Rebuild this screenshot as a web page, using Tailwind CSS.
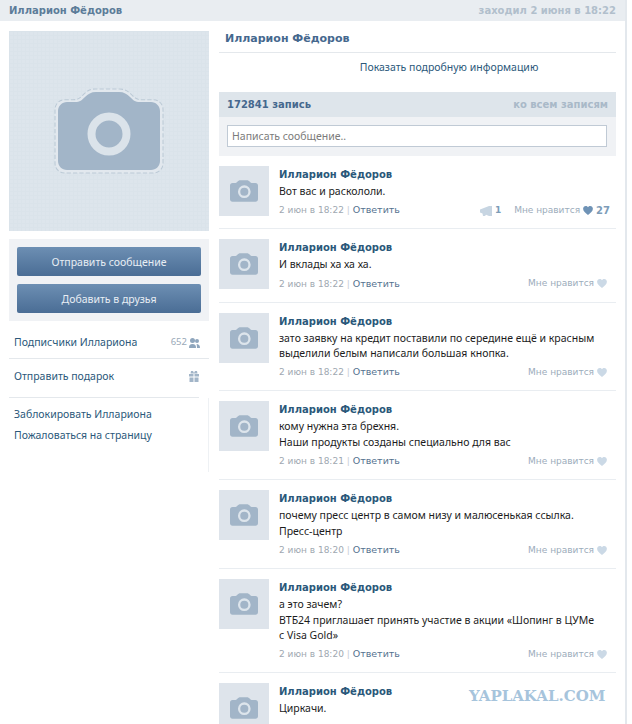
<!DOCTYPE html>
<html lang="ru">
<head>
  <meta charset="UTF-8" />
  <title>Илларион Фёдоров</title>
  <script src="https://cdn.jsdelivr.net/npm/@tailwindcss/browser@4"></script>
</head>
<body class="bg-white font-['Noto_Sans',sans-serif] text-[10.5px] text-[#1c1c1c]">
  <svg class="hidden">
    <symbol id="cam" viewBox="0 0 102 78">
      <path fill="#a2b5c8" d="M9 10h8c5 0 7-2 10-5 3-3 6-5 11-5h23c5 0 8 2 11 5 3 3 5 5 10 5h11c5 0 9 4 9 9v50c0 5-4 9-9 9H9c-5 0-9-4-9-9V19c0-5 4-9 9-9z"/>
    </symbol>
    <symbol id="heart" viewBox="0 0 12 11">
      <path d="M6 11C3 8.600 0 6.500 0 3.400 0 1.400 1.500 0 3.300 0 4.400 0 5.400.6 6 1.600 6.600.6 7.600 0 8.700 0 10.500 0 12 1.400 12 3.400 12 6.500 9 8.600 6 11z"/>
    </symbol>
  </svg>

  <div class="relative h-[724px] w-[632px] overflow-hidden">
    <div class="w-[627px] h-full border-r-2 border-[#e3e8ed]">
      <div class="flex h-[21px] items-center justify-between bg-[#e9edf1] pl-[9px] pr-[9px] font-['DejaVu_Sans',sans-serif] text-[10px] font-bold text-[#5c7c99]">
        <span>Илларион Фёдоров</span>
        <span class="text-[#b1bfcc]">заходил 2 июня в 18:22</span>
      </div>

      <div class="flex pl-[9px] pt-[10px]">
        <div class="w-[200px] shrink-0">
          <svg class="block h-[200px] w-[200px]" viewBox="0 0 200 200">
            <defs>
              <pattern id="weave" width="4" height="4" patternUnits="userSpaceOnUse">
                <rect width="4" height="4" fill="#dde5ec"/>
                <path d="M0 .5h4M.5 0v4" stroke="#dae3ea" stroke-width="1"/>
              </pattern>
            </defs>
            <rect width="200" height="200" fill="url(#weave)"/>
            <path transform="translate(46 58) scale(1.059 1.077)" fill="#e2e8ee" stroke="#bccad6" stroke-width="1" stroke-dasharray="4 2" d="M9 10h8c5 0 7-2 10-5 3-3 6-5 11-5h23c5 0 8 2 11 5 3 3 5 5 10 5h11c5 0 9 4 9 9v50c0 5-4 9-9 9H9c-5 0-9-4-9-9V19c0-5 4-9 9-9z"/>
            <use href="#cam" x="49" y="61" width="102" height="78"/>
            <circle cx="100" cy="103" r="17.500" fill="none" stroke="#dbe3ea" stroke-width="8"/>
          </svg>

          <div class="mt-2 flex flex-col gap-2 bg-[#f0f2f5] p-2">
            <div class="flex h-[29px] items-center justify-center rounded-[2px] bg-gradient-to-b from-[#6d8fb3] to-[#4a6d95] pt-[2px] text-[#e8eef4]">Отправить сообщение</div>
            <div class="flex h-[29px] items-center justify-center rounded-[2px] bg-gradient-to-b from-[#6d8fb3] to-[#4a6d95] pt-[2px] text-[#e8eef4]">Добавить в друзья</div>
          </div>

          <div class="flex h-[38px] items-center justify-between border-b border-[#e4e8ec] pl-[5px] pr-[9px] pt-[6px] text-[#2b587a]">
            <span>Подписчики Иллариона</span>
            <span class="flex items-center gap-[2px] text-[9.5px] text-[#9aa9b8]">652
              <svg class="h-[10px] w-[11px]" viewBox="0 0 11 10" fill="#8fa6bd"><circle cx="3.500" cy="2.500" r="2.500"/><path d="M0 10c0-3 1-4 3.500-4S7 7 7 10z"/><circle cx="8" cy="3" r="2"/><path d="M7.500 6c2 0 3.500 1 3.500 4H8c0-2-.2-3-.5-4z"/></svg>
            </span>
          </div>
          <div class="flex h-[39px] w-[190px] items-center justify-between border-b border-[#e4e8ec] pb-[3px] pl-[5px] text-[#2b587a]">
            <span>Отправить подарок</span>
            <svg class="h-[11px] w-[10px]" viewBox="0 0 10 11" fill="#a2b5c8"><path d="M0 3h4.500v2.500H0zM5.500 3H10v2.500H5.500zM.5 6.500h4V11h-4zM5.500 6.500h4V11h-4z"/><path d="M2 0h2l1 2 1-2h2l.5 2.500h-7z"/></svg>
          </div>
          <div class="flex flex-col gap-[5px] border-r border-[#eef1f4] pb-[29px] pl-[5px] pt-[8px] text-[#2b587a]">
            <span class="leading-[16px]">Заблокировать Иллариона</span>
            <span class="leading-[16px]">Пожаловаться на страницу</span>
          </div>
        </div>

        <div class="ml-[10px] w-[397px]">
          <div class="flex h-[22px] items-center border-b border-[#e4e8ec] pb-[4px] pl-[6px] font-['DejaVu_Sans',sans-serif] text-[11px] font-bold text-[#45688e]">Илларион Фёдоров</div>
          <div class="flex h-[39px] justify-center pl-[63px] pt-[7px] text-[#2b587a]">Показать подробную информацию</div>
          <div class="flex h-[25px] items-center justify-between bg-[#dee5eb] px-2 font-['DejaVu_Sans',sans-serif] text-[10px] font-bold text-[#45688e]">
            <span>172841 запись</span>
            <span class="text-[#a9b9c8]">ко всем записям</span>
          </div>
          <div class="h-[39px] bg-[#f0f2f5] px-2 pt-2">
            <div class="flex h-[22px] w-[380px] items-center border border-[#c0cad5] bg-white pl-1 pt-[1px] text-[#7b7b7b]">Написать сообщение..</div>
          </div>

          <div id="wall" class="mt-[10px]">
            <div class="mb-[10px] flex border-b border-[#e9edf1] pb-[8.83px]">
              <svg class="h-[50px] w-[50px] shrink-0" viewBox="0 0 50 50"><rect width="50" height="50" fill="#dee4eb"/><use href="#cam" x="11" y="14" width="28" height="22"/><circle cx="25.300" cy="25.700" r="5.200" fill="none" stroke="#dde5ec" stroke-width="2.300"/></svg>
              <div class="ml-[10px] flex-1 pr-[6px]">
                <div class="mt-[1px] h-4 font-['DejaVu_Sans',sans-serif] text-[10px] font-bold leading-4 text-[#2b587a]">Илларион Фёдоров</div>
                <div class="mt-[1px] leading-[15.5px]">Вот вас и раскололи.</div>
                <div class="mt-[2px] flex h-[18px] items-center justify-between font-['DejaVu_Sans',sans-serif] text-[9px] text-[#a0a8b1]">
                  <span>2 июн в 18:22 <span class="text-[#c5ccd3]">|</span> <span class="text-[9.5px] text-[#55728f]">Ответить</span></span>
                  <span class="flex items-center">
                    <svg class="h-[10px] w-[12px]" viewBox="0 0 12 10" fill="#c7d5e2"><path d="M0 3.500 9 0h3v10H9L6 8.700 5 10H3L2.500 7.500 0 6.500z"/></svg>
                    <span class="ml-[3px] font-bold text-[#7d9cb8]">1</span>
                    <span class="ml-[13px] text-[#9cacbb]">Мне нравится</span>
                    <svg class="ml-[3px] h-[9px] w-[10px] fill-[#6f93b6]"><use href="#heart"/></svg>
                    <span class="ml-[3px] text-[10px] font-bold text-[#7d9cb8]">27</span>
                  </span>
                </div>
              </div>
            </div>

            <div class="mb-[10px] flex border-b border-[#e9edf1] pb-[8.83px]">
              <svg class="h-[50px] w-[50px] shrink-0" viewBox="0 0 50 50"><rect width="50" height="50" fill="#dee4eb"/><use href="#cam" x="11" y="14" width="28" height="22"/><circle cx="25.300" cy="25.700" r="5.200" fill="none" stroke="#dde5ec" stroke-width="2.300"/></svg>
              <div class="ml-[10px] flex-1 pr-[6px]">
                <div class="mt-[1px] h-4 font-['DejaVu_Sans',sans-serif] text-[10px] font-bold leading-4 text-[#2b587a]">Илларион Фёдоров</div>
                <div class="mt-[1px] leading-[15.5px]">И вклады ха ха ха.</div>
                <div class="mt-[2px] flex h-[18px] items-center justify-between font-['DejaVu_Sans',sans-serif] text-[9px] text-[#a0a8b1]">
                  <span>2 июн в 18:22 <span class="text-[#c5ccd3]">|</span> <span class="text-[9.5px] text-[#55728f]">Ответить</span></span>
                  <span class="flex items-center"><span class="text-[#9cacbb]">Мне нравится</span><svg class="ml-[3px] mr-[3px] h-[9px] w-[10px] fill-[#cbd9e6]"><use href="#heart"/></svg></span>
                </div>
              </div>
            </div>

            <div class="mb-[10px] flex border-b border-[#e9edf1] pb-[8.83px]">
              <svg class="h-[50px] w-[50px] shrink-0" viewBox="0 0 50 50"><rect width="50" height="50" fill="#dee4eb"/><use href="#cam" x="11" y="14" width="28" height="22"/><circle cx="25.300" cy="25.700" r="5.200" fill="none" stroke="#dde5ec" stroke-width="2.300"/></svg>
              <div class="ml-[10px] flex-1 pr-[6px]">
                <div class="mt-[1px] h-4 font-['DejaVu_Sans',sans-serif] text-[10px] font-bold leading-4 text-[#2b587a]">Илларион Фёдоров</div>
                <div class="mt-[1px] leading-[15.5px]">зато заявку на кредит поставили по середине ещё и красным<br>выделили белым написали большая кнопка.</div>
                <div class="mt-[2px] flex h-[18px] items-center justify-between font-['DejaVu_Sans',sans-serif] text-[9px] text-[#a0a8b1]">
                  <span>2 июн в 18:22 <span class="text-[#c5ccd3]">|</span> <span class="text-[9.5px] text-[#55728f]">Ответить</span></span>
                  <span class="flex items-center"><span class="text-[#9cacbb]">Мне нравится</span><svg class="ml-[3px] mr-[3px] h-[9px] w-[10px] fill-[#cbd9e6]"><use href="#heart"/></svg></span>
                </div>
              </div>
            </div>

            <div class="mb-[10px] flex border-b border-[#e9edf1] pb-[8.83px]">
              <svg class="h-[50px] w-[50px] shrink-0" viewBox="0 0 50 50"><rect width="50" height="50" fill="#dee4eb"/><use href="#cam" x="11" y="14" width="28" height="22"/><circle cx="25.300" cy="25.700" r="5.200" fill="none" stroke="#dde5ec" stroke-width="2.300"/></svg>
              <div class="ml-[10px] flex-1 pr-[6px]">
                <div class="mt-[1px] h-4 font-['DejaVu_Sans',sans-serif] text-[10px] font-bold leading-4 text-[#2b587a]">Илларион Фёдоров</div>
                <div class="mt-[1px] leading-[15.5px]">кому нужна эта брехня.<br>Наши продукты созданы специально для вас</div>
                <div class="mt-[2px] flex h-[18px] items-center justify-between font-['DejaVu_Sans',sans-serif] text-[9px] text-[#a0a8b1]">
                  <span>2 июн в 18:21 <span class="text-[#c5ccd3]">|</span> <span class="text-[9.5px] text-[#55728f]">Ответить</span></span>
                  <span class="flex items-center"><span class="text-[#9cacbb]">Мне нравится</span><svg class="ml-[3px] mr-[3px] h-[9px] w-[10px] fill-[#cbd9e6]"><use href="#heart"/></svg></span>
                </div>
              </div>
            </div>

            <div class="mb-[10px] flex border-b border-[#e9edf1] pb-[8.83px]">
              <svg class="h-[50px] w-[50px] shrink-0" viewBox="0 0 50 50"><rect width="50" height="50" fill="#dee4eb"/><use href="#cam" x="11" y="14" width="28" height="22"/><circle cx="25.300" cy="25.700" r="5.200" fill="none" stroke="#dde5ec" stroke-width="2.300"/></svg>
              <div class="ml-[10px] flex-1 pr-[6px]">
                <div class="mt-[1px] h-4 font-['DejaVu_Sans',sans-serif] text-[10px] font-bold leading-4 text-[#2b587a]">Илларион Фёдоров</div>
                <div class="mt-[1px] leading-[15.5px]">почему пресс центр в самом низу и малюсенькая ссылка.<br>Пресс-центр</div>
                <div class="mt-[2px] flex h-[18px] items-center justify-between font-['DejaVu_Sans',sans-serif] text-[9px] text-[#a0a8b1]">
                  <span>2 июн в 18:20 <span class="text-[#c5ccd3]">|</span> <span class="text-[9.5px] text-[#55728f]">Ответить</span></span>
                  <span class="flex items-center"><span class="text-[#9cacbb]">Мне нравится</span><svg class="ml-[3px] mr-[3px] h-[9px] w-[10px] fill-[#cbd9e6]"><use href="#heart"/></svg></span>
                </div>
              </div>
            </div>

            <div class="mb-[10px] flex border-b border-[#e9edf1] pb-[8.83px]">
              <svg class="h-[50px] w-[50px] shrink-0" viewBox="0 0 50 50"><rect width="50" height="50" fill="#dee4eb"/><use href="#cam" x="11" y="14" width="28" height="22"/><circle cx="25.300" cy="25.700" r="5.200" fill="none" stroke="#dde5ec" stroke-width="2.300"/></svg>
              <div class="ml-[10px] flex-1 pr-[6px]">
                <div class="mt-[1px] h-4 font-['DejaVu_Sans',sans-serif] text-[10px] font-bold leading-4 text-[#2b587a]">Илларион Фёдоров</div>
                <div class="mt-[1px] leading-[15.5px]">а это зачем?<br>ВТБ24 приглашает принять участие в акции «Шопинг в ЦУМе<br>с Visa Gold»</div>
                <div class="mt-[2px] flex h-[18px] items-center justify-between font-['DejaVu_Sans',sans-serif] text-[9px] text-[#a0a8b1]">
                  <span>2 июн в 18:20 <span class="text-[#c5ccd3]">|</span> <span class="text-[9.5px] text-[#55728f]">Ответить</span></span>
                  <span class="flex items-center"><span class="text-[#9cacbb]">Мне нравится</span><svg class="ml-[3px] mr-[3px] h-[9px] w-[10px] fill-[#cbd9e6]"><use href="#heart"/></svg></span>
                </div>
              </div>
            </div>

            <div class="flex">
              <svg class="h-[50px] w-[50px] shrink-0" viewBox="0 0 50 50"><rect width="50" height="50" fill="#dee4eb"/><use href="#cam" x="11" y="14" width="28" height="22"/><circle cx="25.300" cy="25.700" r="5.200" fill="none" stroke="#dde5ec" stroke-width="2.300"/></svg>
              <div class="ml-[10px] flex-1">
                <div class="mt-[1px] h-4 font-['DejaVu_Sans',sans-serif] text-[10px] font-bold leading-4 text-[#2b587a]">Илларион Фёдоров</div>
                <div class="mt-[1px] leading-[15.5px]">Циркачи.</div>
              </div>
            </div>
          </div>
        </div>
      </div>
    </div>

    <div class="absolute left-[469px] top-[688px] font-['DejaVu_Serif',serif] text-[15px] font-bold leading-[16px] text-[#a6c4dc]">YAPLAKAL.COM</div>
  </div>
</body>
</html>
